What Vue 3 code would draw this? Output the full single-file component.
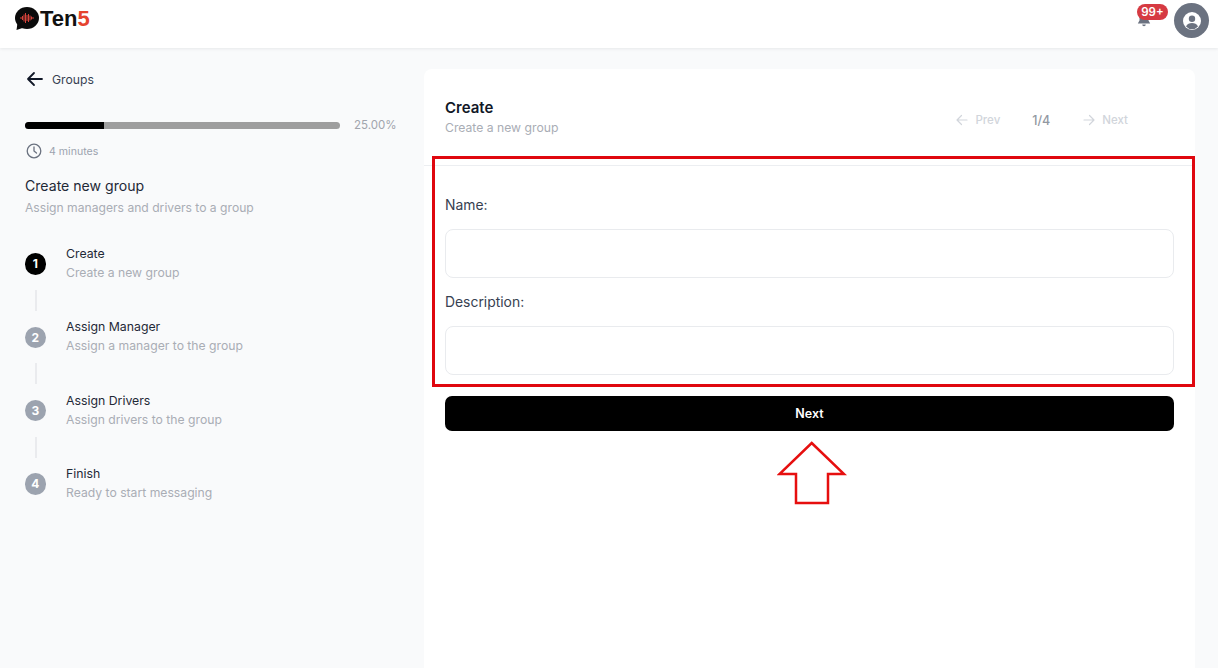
<script setup>
const steps = [
  { n: 1, title: 'Create', sub: 'Create a new group', active: true },
  { n: 2, title: 'Assign Manager', sub: 'Assign a manager to the group' },
  { n: 3, title: 'Assign Drivers', sub: 'Assign drivers to the group' },
  { n: 4, title: 'Finish', sub: 'Ready to start messaging' }
]
const bars = [[5.5,2],[7,4],[8.5,7],[10,10],[11.5,6],[13,8],[14.5,5],[16,3],[17.5,2]]
</script>

<template>
  <div class="page">
    <header class="topbar">
      <div class="logo">
        <svg width="24" height="25" viewBox="0 0 24 25" class="mark">
          <ellipse cx="12" cy="12" rx="12" ry="11" fill="#0b0b0b" />
          <path d="M2.500 17 L1.500 24 L9 21.500 Z" fill="#0b0b0b" />
          <rect v-for="b in bars" :key="b[0]" :x="b[0]" :y="12 - b[1] / 2" width="1" :height="b[1]" fill="#d8433b" />
        </svg>
        <span class="word">Ten<em>5</em></span>
      </div>
      <div class="top-right">
        <div class="bell">
          <svg width="14" height="16" viewBox="0 0 14 16">
            <path d="M7 0.500a4.500 4.500 0 0 0-4.500 4.500V9.500L0.800 12.500h12.400L11.500 9.500V5A4.500 4.500 0 0 0 7 0.500z" fill="#6b7280" />
            <path d="M5.200 13.500a1.800 1.800 0 0 0 3.600 0z" fill="#6b7280" />
          </svg>
          <span class="badge">99+</span>
        </div>
        <div class="avatar">
          <svg width="20" height="20" viewBox="0 0 20 20">
            <circle cx="10" cy="10" r="9" fill="#fff" />
            <circle cx="10" cy="7.800" r="3.200" fill="#6b7280" />
            <path d="M4 15.500c1.300-2.400 3.400-3.400 6-3.400s4.700 1 6 3.400a8 8 0 0 1-12 0z" fill="#6b7280" />
          </svg>
        </div>
      </div>
    </header>

    <div class="body">
      <aside class="side">
        <div class="back">
          <svg width="18" height="18" viewBox="0 0 18 18" fill="none" stroke="#111827" stroke-width="1.800" stroke-linecap="round" stroke-linejoin="round">
            <path d="M16 9H2M8 3 2 9l6 6" />
          </svg>
          <span>Groups</span>
        </div>
        <div class="progress-row">
          <div class="track"><div class="fill" style="width: 25%"></div></div>
          <span class="pct">25.00%</span>
        </div>
        <div class="time">
          <svg width="16" height="16" viewBox="0 0 16 16" fill="none" stroke="#6b7280" stroke-width="1.300" stroke-linecap="round" stroke-linejoin="round">
            <circle cx="8" cy="8" r="6.800" />
            <path d="M8 4v4l2.500 2" />
          </svg>
          <span>4 minutes</span>
        </div>
        <h2 class="side-title">Create new group</h2>
        <p class="side-sub">Assign managers and drivers to a group</p>
        <ol class="steps">
          <li v-for="s in steps" :key="s.n" class="step">
            <span class="dot" :class="{ on: s.active }">{{ s.n }}</span>
            <div class="step-text">
              <div class="step-title">{{ s.title }}</div>
              <div class="step-sub">{{ s.sub }}</div>
            </div>
          </li>
        </ol>
      </aside>

      <main class="card">
        <div class="card-head">
          <div>
            <h1>Create</h1>
            <p>Create a new group</p>
          </div>
          <nav class="pager">
            <span class="pg">
              <svg width="14" height="14" viewBox="0 0 14 14" fill="none" stroke="#d1d5db" stroke-width="1.200" stroke-linecap="round" stroke-linejoin="round"><path d="M12 7H2M6.500 2.500 2 7l4.500 4.500" /></svg>
              Prev
            </span>
            <span class="count">1/4</span>
            <span class="pg">
              <svg width="14" height="14" viewBox="0 0 14 14" fill="none" stroke="#d1d5db" stroke-width="1.200" stroke-linecap="round" stroke-linejoin="round"><path d="M2 7h10M7.500 2.500 12 7l-4.500 4.500" /></svg>
              Next
            </span>
          </nav>
        </div>
        <form class="form" @submit.prevent>
          <label for="name">Name:</label>
          <input id="name" type="text" />
          <label for="desc">Description:</label>
          <input id="desc" type="text" />
          <button type="submit">Next</button>
        </form>
      </main>
    </div>

    <div class="callout-box"></div>
    <svg class="callout-arrow" width="70" height="66" viewBox="0 0 70 66">
      <path d="M34.700 3 L67 34 H51 V63 H19 V34 H2.500 Z" fill="#fff" stroke="#e60f0f" stroke-width="2.500" />
    </svg>
  </div>
</template>

<style>
html, body { margin: 0; background: #f9fafb; }
</style>

<style scoped>
* { box-sizing: border-box; }
.page {
  position: relative;
  width: 1218px;
  height: 668px;
  overflow: hidden;
  background: #f9fafb;
  font-family: Inter, "Noto Sans", sans-serif;
  color: #111827;
}
.topbar {
  height: 48px;
  background: #fff;
  box-shadow: 0 1px 3px rgba(17, 24, 39, 0.08);
  display: flex;
  align-items: flex-start;
  justify-content: space-between;
  padding: 6px 9px 0 15px;
}
.logo { display: flex; align-items: center; height: 25px; }
.mark { display: block; }
.word {
  font-family: "Liberation Sans", Arial, sans-serif;
  font-size: 22px;
  font-weight: 700;
  color: #111;
  margin-left: 1px;
}
.word em { font-style: normal; color: #e5432f; }
.top-right { display: flex; align-items: flex-start; gap: 23px; margin-top: -3px; }
.bell { position: relative; width: 14px; height: 24px; margin-top: 1px; padding-top: 7px; }
.bell svg { display: block; }
.badge {
  position: absolute;
  left: 0;
  top: 0;
  width: 31px;
  height: 16px;
  border-radius: 8px;
  background: #d63a42;
  color: #fff;
  font-size: 11.500px;
  font-weight: 600;
  line-height: 16px;
  text-align: center;
}
.avatar {
  width: 35px;
  height: 35px;
  border-radius: 50%;
  background: #6b7280;
  display: flex;
  align-items: center;
  justify-content: center;
}
.body { display: flex; align-items: flex-start; }
.side { width: 424px; flex: none; padding: 21px 0 0 25px; }
.back {
  display: flex;
  align-items: center;
  gap: 8px;
  height: 20px;
  font-size: 12.200px;
  color: #374151;
  margin-left: 1px;
}
.progress-row { display: flex; align-items: center; margin-top: 26px; height: 20px; }
.track { width: 315px; height: 7px; border-radius: 4px; background: #9e9e9e; overflow: hidden; }
.fill { height: 100%; background: #000; }
.pct { margin-left: 14px; font-size: 11.500px; color: #a1a5ad; }
.time {
  display: flex;
  align-items: center;
  gap: 7px;
  height: 16px;
  margin-top: 8px;
  margin-left: 1px;
  font-size: 10.600px;
  color: #9ca3af;
}
.side-title { margin: 17px 0 0; font-size: 14.100px; line-height: 20px; font-weight: 400; color: #1f2937; }
.side-sub { margin: 2px 0 0; font-size: 12.130px; line-height: 20px; color: #a9adb5; }
.steps { list-style: none; margin: 26px 0 0; padding: 0; }
.step { position: relative; display: flex; align-items: center; height: 40px; margin-bottom: 33.300px; }
.step:not(:last-child)::after {
  content: "";
  position: absolute;
  left: 10px;
  top: 46px;
  width: 2px;
  height: 21px;
  background: #eaebee;
}
.dot {
  width: 21.500px;
  height: 21.500px;
  margin-left: -0.500px;
  border-radius: 50%;
  background: #9ca3af;
  color: #fff;
  font-size: 12px;
  font-weight: 700;
  text-align: center;
  line-height: 21.500px;
  flex: none;
}
.dot.on { background: #000; }
.step-text { margin: -2px 0 0 20px; }
.step-title { font-size: 12.300px; line-height: 19px; font-weight: 400; color: #1f2937; }
.step-sub { font-size: 12.200px; line-height: 19px; color: #a9adb5; }
.card {
  width: 771px;
  height: 620px;
  margin-top: 21px;
  background: #fff;
  border-radius: 8px 8px 0 0;
}
.card-head {
  display: flex;
  justify-content: space-between;
  height: 97px;
  padding: 29px 67px 0 21px;
  border-bottom: 1px solid #eceef1;
}
.card-head h1 { margin: 0; font-size: 15px; line-height: 20px; font-weight: 600; color: #111827; }
.card-head p { margin: 0; font-size: 12.200px; line-height: 20px; color: #a9adb5; }
.pager { display: flex; align-items: center; height: 44px; font-size: 11.500px; color: #d1d5db; font-weight: 500; }
.pg { display: flex; align-items: center; gap: 6px; }
.count { margin: 0 32px 0 32px; font-size: 12.500px; color: #9298a2; }
.form { display: flex; flex-direction: column; padding: 29px 21px 0; }
label { font-size: 13.900px; line-height: 20px; color: #374151; height: 20px; }
input {
  height: 49px;
  margin: 14px 0 14px;
  border: 1px solid #e9ebee;
  border-radius: 8px;
  background: #fff;
  outline: none;
}
input:last-of-type { margin-bottom: 21px; }
button {
  height: 35px;
  border: none;
  border-radius: 7px;
  background: #000;
  color: #fff;
  font-family: inherit;
  font-size: 12.500px;
  font-weight: 600;
}
.callout-box {
  position: absolute;
  left: 432px;
  top: 156px;
  width: 763px;
  height: 231px;
  border: 3px solid #e0070f;
  pointer-events: none;
}
.callout-arrow { position: absolute; left: 777px; top: 440px; }
</style>
